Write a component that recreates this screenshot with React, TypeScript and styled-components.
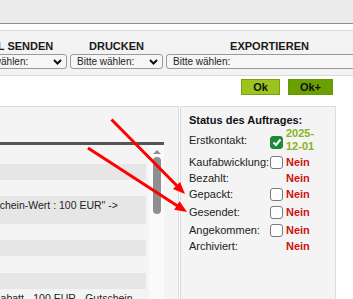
import React from "react";
import styled, { createGlobalStyle } from "styled-components";

const Global = createGlobalStyle`
  html, body { margin: 0; padding: 0; background: #ffffff; }
  body { font-family: "Liberation Sans", Arial, sans-serif; color: #222; overflow: hidden; }
  * { box-sizing: border-box; }
`;

const Page = styled.div`
  position: relative;
  width: 353px;
  height: 299px;
  overflow: hidden;
  background: #fff;
`;

const TopBar = styled.div`
  height: 24px;
  background: #ececec;
  border-bottom: 1px solid #8e8e8e;
`;

const Toolbar = styled.div`
  margin-top: 6px;
  background: #f3f3f3;
  border-top: 1px solid #d9d9d9;
  border-bottom: 1px solid #d9d9d9;
  padding: 9px 0 6px;
`;

const ToolGrid = styled.div`
  display: grid;
  grid-template-columns: 103px 93px 207px;
  column-gap: 3px;
  row-gap: 1px;
  margin-left: -36px;
`;

const ColHead = styled.div`
  font-weight: bold;
  font-size: 11px;
  line-height: 13px;
  text-align: center;
  color: #1a1a1a;
  white-space: nowrap;
`;

const SelectBox = styled.div`
  height: 15px;
  display: flex;
  align-items: center;
  justify-content: space-between;
  padding: 0 4px 0 6px;
  font-size: 10px;
  color: #222;
  background: #f6f6f6;
  border: 1px solid #9a9a9a;
  border-radius: 3px;
  white-space: nowrap;
`;

const Chevron = () => (
  <svg width="9" height="6" viewBox="0 0 9 6">
    <polyline points="1,1 4.5,4.5 8,1" fill="none" stroke="#111" strokeWidth="2" />
  </svg>
);

const ButtonRow = styled.div`
  display: flex;
  justify-content: flex-end;
  gap: 8px;
  padding-right: 20px;
  margin-top: 3px;
`;

const OkButton = styled.div<{ $dark?: boolean; $w: number }>`
  width: ${(p) => p.$w}px;
  height: 16px;
  display: flex;
  align-items: center;
  justify-content: center;
  font-size: 11px;
  font-weight: bold;
  color: #111;
  background: ${(p) => (p.$dark ? "#6aa100" : "#9bc41f")};
  border: 1px solid ${(p) => (p.$dark ? "#66990a" : "#7b9f12")};
`;

const Panels = styled.div`
  display: flex;
  gap: 1px;
  margin-top: 11px;
  height: 200px;
`;

const LeftPanel = styled.div`
  margin-left: -36px;
  width: 215px;
  background: #f4f4f4;
  border: 1px solid #dcdcdc;
  padding: 35px 14px 0 0;
`;

const ListArea = styled.div`
  border-top: 3px solid #555;
  display: flex;
  height: 160px;
`;

const Rows = styled.div`
  flex: 1;
  padding-right: 3px;
  display: flex;
  flex-direction: column;
`;

const Row = styled.div<{ $gray?: boolean; $h: number; $indent?: number }>`
  height: ${(p) => p.$h}px;
  flex: none;
  background: ${(p) => (p.$gray ? "#e6e6e6" : "transparent")};
  padding: 3px 0 0 ${(p) => p.$indent ?? 0}px;
  font-size: 10.5px;
  line-height: 13px;
  color: #222;
  white-space: nowrap;
`;

const ScrollTrack = styled.div`
  width: 15px;
  background: #fafafa;
  display: flex;
  flex-direction: column;
  align-items: center;
  padding-top: 5px;
`;

const ScrollArrow = styled.div`
  width: 0;
  height: 0;
  border-left: 4px solid transparent;
  border-right: 4px solid transparent;
  border-bottom: 4px solid #8f8f8f;
`;

const ScrollThumb = styled.div`
  width: 8px;
  height: 57px;
  margin-top: 3px;
  border-radius: 4px;
  background: #8f8f8f;
`;

const RightPanel = styled.div`
  width: 156px;
  background: #f4f4f4;
  border: 1px solid #dcdcdc;
  padding: 7px 0 0 8px;
`;

const Title = styled.div`
  font-weight: bold;
  font-size: 11px;
  line-height: 13px;
  color: #111;
`;

const StatusGrid = styled.div`
  display: grid;
  grid-template-columns: 81px 16px auto;
  font-size: 11px;
  line-height: 13px;
`;

const Label = styled.div<{ $h: number }>`
  height: ${(p) => p.$h}px;
  display: flex;
  align-items: center;
  color: #222;
  white-space: nowrap;
`;

const BoxCell = styled.div<{ $h: number; $shift?: number }>`
  height: ${(p) => p.$h}px;
  display: flex;
  align-items: center;
  padding-top: ${(p) => p.$shift ?? 0}px;
`;

const Check = styled.div<{ $on?: boolean }>`
  width: 13px;
  height: 13px;
  border-radius: 3px;
  border: 1px solid ${(p) => (p.$on ? "#1d8a3a" : "#7a7a7a")};
  background: ${(p) => (p.$on ? "#1d8a3a" : "#fff")};
  display: flex;
  align-items: center;
  justify-content: center;
`;

const Value = styled.div<{ $h: number; $ok?: boolean }>`
  height: ${(p) => p.$h}px;
  display: flex;
  align-items: center;
  font-weight: bold;
  color: ${(p) => (p.$ok ? "#8bb220" : "#cf1010")};
`;

const Overlay = styled.svg`
  position: absolute;
  left: 0;
  top: 0;
  pointer-events: none;
`;

type Arrow = { x1: number; y1: number; x2: number; y2: number };
const arrows: Arrow[] = [
  { x1: 111.5, y1: 119.5, x2: 185, y2: 194 },
  { x1: 88, y1: 148, x2: 187, y2: 212 },
];

function head(a: Arrow) {
  const dx = a.x2 - a.x1;
  const dy = a.y2 - a.y1;
  const len = Math.hypot(dx, dy);
  const ux = dx / len;
  const uy = dy / len;
  const L = 12;
  const W = 5;
  const bx = a.x2 - ux * L;
  const by = a.y2 - uy * L;
  return `${a.x2},${a.y2} ${bx - uy * W},${by + ux * W} ${bx + uy * W},${by - ux * W}`;
}

function lineEnd(a: Arrow) {
  const dx = a.x2 - a.x1;
  const dy = a.y2 - a.y1;
  const len = Math.hypot(dx, dy);
  return { x: a.x2 - (dx / len) * 8, y: a.y2 - (dy / len) * 8 };
}

type Status = { label: string; box?: "on" | "off"; value: string; h: number; ok?: boolean };
const statuses: Status[] = [
  { label: "Erstkontakt:", box: "on", value: "2025-\n12-01", h: 26, ok: true },
  { label: "Kaufabwicklung:", box: "off", value: "Nein", h: 18 },
  { label: "Bezahlt:", value: "Nein", h: 14 },
  { label: "Gepackt:", box: "off", value: "Nein", h: 18 },
  { label: "Gesendet:", box: "off", value: "Nein", h: 18 },
  { label: "Angekommen:", box: "off", value: "Nein", h: 18 },
  { label: "Archiviert:", value: "Nein", h: 14 },
];

type ListRow = { gray?: boolean; h: number; text?: string; indent?: number };
const listRows: ListRow[] = [
  { h: 19 },
  { gray: true, h: 16 },
  { h: 16 },
  { gray: true, h: 28, text: "\u201EGutschein-Wert : 100 EUR\" ->", indent: 9 },
  { h: 16 },
  { gray: true, h: 16 },
  { h: 17 },
  { gray: true, h: 16 },
  { h: 20, text: "Rabatt - 100 EUR - Gutschein-", indent: 28 },
];

export default function App() {
  return (
    <Page>
      <Global />
      <TopBar />
      <Toolbar>
        <ToolGrid>
          <ColHead>MAIL SENDEN</ColHead>
          <ColHead>DRUCKEN</ColHead>
          <ColHead>EXPORTIEREN</ColHead>
          <SelectBox>
            <span>Bitte wählen:</span>
            <Chevron />
          </SelectBox>
          <SelectBox>
            <span>Bitte wählen:</span>
            <Chevron />
          </SelectBox>
          <SelectBox>
            <span>Bitte wählen:</span>
            <Chevron />
          </SelectBox>
        </ToolGrid>
      </Toolbar>
      <ButtonRow>
        <OkButton $w={39}>Ok</OkButton>
        <OkButton $w={45} $dark>
          Ok+
        </OkButton>
      </ButtonRow>
      <Panels>
        <LeftPanel>
          <ListArea>
            <Rows>
              {listRows.map((r, i) => (
                <Row key={i} $gray={r.gray} $h={r.h} $indent={r.indent}>
                  {r.text}
                </Row>
              ))}
            </Rows>
            <ScrollTrack>
              <ScrollArrow />
              <ScrollThumb />
            </ScrollTrack>
          </ListArea>
        </LeftPanel>
        <RightPanel>
          <Title>Status des Auftrages:</Title>
          <StatusGrid>
            {statuses.map((s) => (
              <React.Fragment key={s.label}>
                <Label $h={s.h}>{s.label}</Label>
                <BoxCell $h={s.h} $shift={s.ok ? 4 : 0}>
                  {s.box && (
                    <Check $on={s.box === "on"}>
                      {s.box === "on" && (
                        <svg width="10" height="9" viewBox="0 0 10 9">
                          <polyline
                            points="1.5,4.5 4,7 8.5,1.5"
                            fill="none"
                            stroke="#fff"
                            strokeWidth="2"
                          />
                        </svg>
                      )}
                    </Check>
                  )}
                </BoxCell>
                <Value $h={s.h} $ok={s.ok}>
                  {s.ok ? (
                    <span>
                      2025-
                      <br />
                      12-01
                    </span>
                  ) : (
                    s.value
                  )}
                </Value>
              </React.Fragment>
            ))}
          </StatusGrid>
        </RightPanel>
      </Panels>
      <Overlay width="353" height="299" viewBox="0 0 353 299">
        {arrows.map((a, i) => {
          const e = lineEnd(a);
          return (
            <g key={i}>
              <line x1={a.x1} y1={a.y1} x2={e.x} y2={e.y} stroke="#ff0000" strokeWidth="3" />
              <polygon points={head(a)} fill="#ff0000" />
            </g>
          );
        })}
      </Overlay>
    </Page>
  );
}
